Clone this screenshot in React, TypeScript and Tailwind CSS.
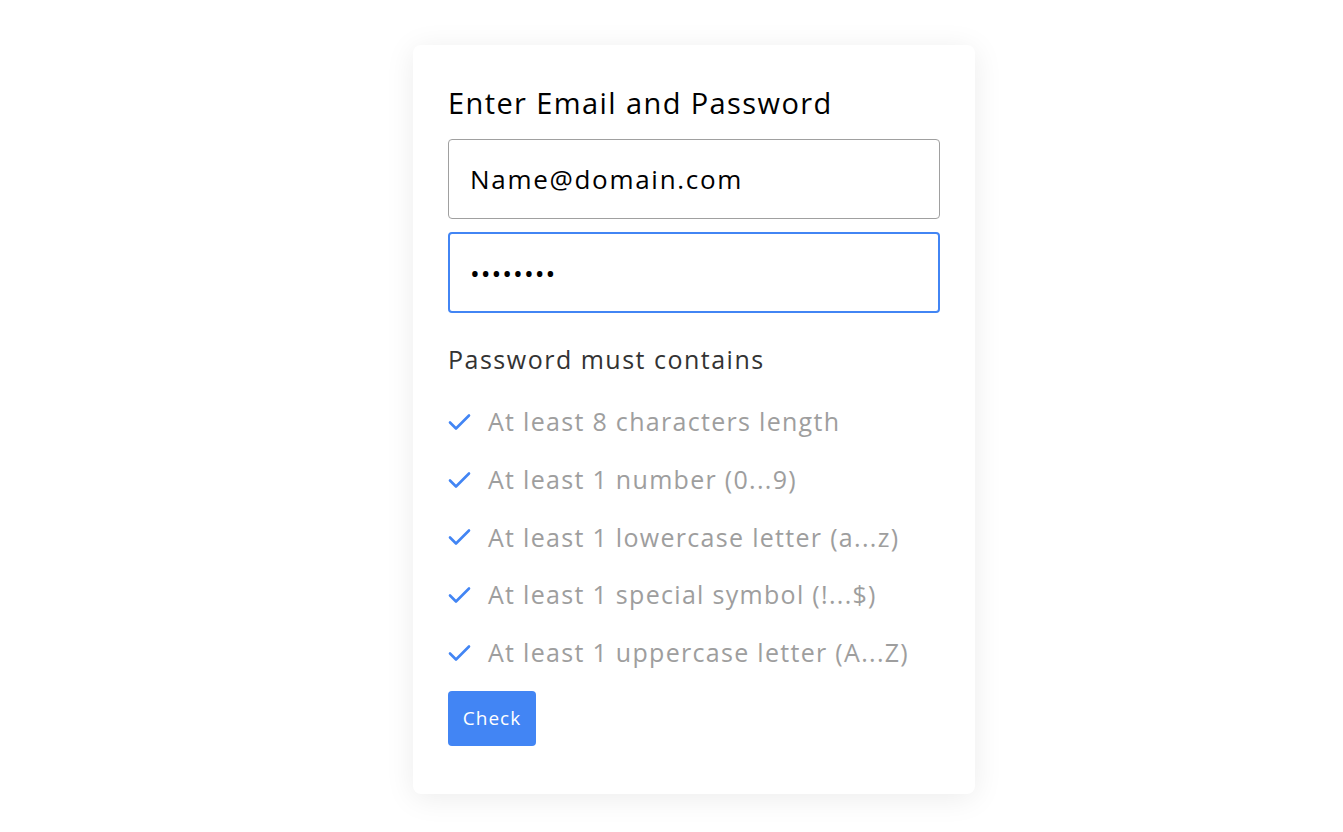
const rules = [
  "At least 8 characters length",
  "At least 1 number (0...9)",
  "At least 1 lowercase letter (a...z)",
  "At least 1 special symbol (!...$)",
  "At least 1 uppercase letter (A...Z)",
];

const CheckMark = () => (
  <svg width="24" height="20" viewBox="0 0 24 20" fill="none" className="shrink-0">
    <path
      d="M2 10.5 L8 16.5 L21 3.5"
      stroke="#4285f4"
      strokeWidth="2.6"
      strokeLinecap="round"
      strokeLinejoin="round"
    />
  </svg>
);

const App = () => {
  return (
    <div
      className="min-h-screen bg-white flex justify-center pt-[45px] pl-[45px]"
      style={{ fontFamily: '"Open Sans", "Noto Sans", sans-serif' }}
    >
      <div className="w-[562px] h-[749px] bg-white rounded-lg shadow-[0_4px_30px_rgba(0,0,0,0.08)] px-[35px] pt-[37px] pb-[48px] flex flex-col">
        {/* Title */}
        <h2 className="text-[29px] leading-[42px] tracking-[1.4px] text-black">
          Enter Email and Password
        </h2>

        {/* Inputs */}
        <div className="mt-[15px] flex flex-col gap-[13px]">
          <input
            type="email"
            defaultValue="Name@domain.com"
            className="h-[80px] w-full rounded border border-[#a0a0a0] px-[21px] text-[26px] tracking-[1.7px] text-black outline-none"
          />
          <input
            type="password"
            defaultValue="password"
            className="h-[81px] w-full rounded border-2 border-[#4285f4] px-[20px] text-[26px] text-black outline-none tracking-[1px]"
          />
        </div>

        {/* Rules */}
        <p className="mt-[28px] text-[25px] leading-[36px] tracking-[1.5px] text-[#333]">
          Password must contains
        </p>
        <ul className="mt-[16px] flex flex-col">
          {rules.map((rule) => (
            <li key={rule} className="h-[57.75px] flex items-center gap-[16px]">
              <CheckMark />
              <span className="text-[25px] tracking-[1.3px] text-[#9e9e9e]">{rule}</span>
            </li>
          ))}
        </ul>

        {/* Button */}
        <button className="mt-[9px] self-start w-[88px] h-[55px] rounded bg-[#4285f4] text-white text-[19px] tracking-[1px]">
          Check
        </button>
      </div>
    </div>
  );
};

export default App;
